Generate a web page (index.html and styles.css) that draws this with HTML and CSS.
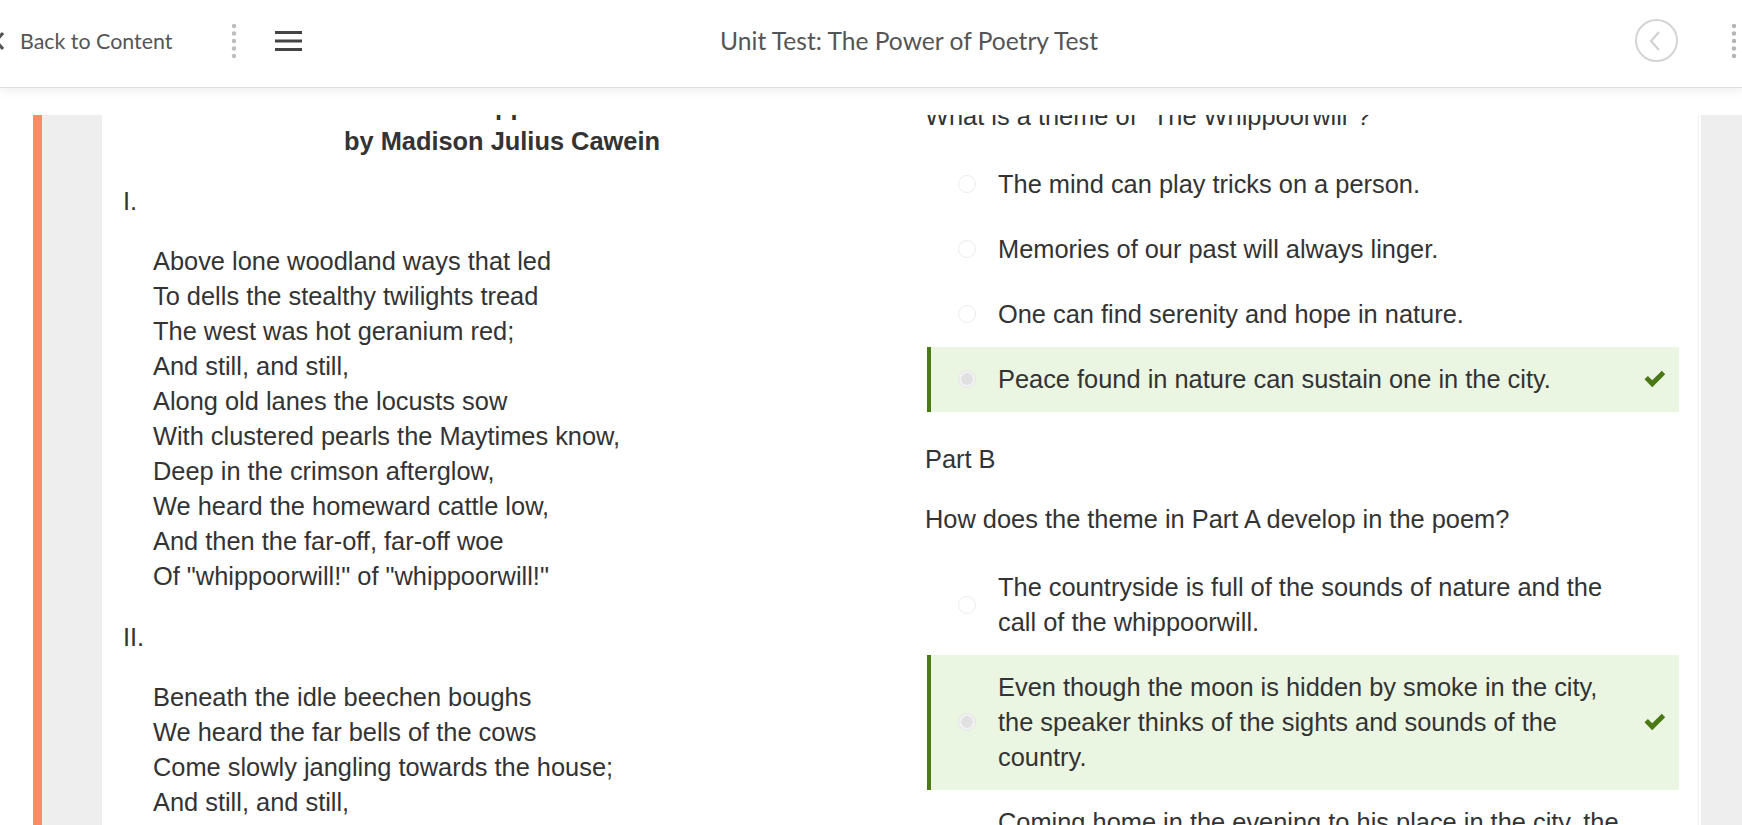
FILE: index.html
```html
<!DOCTYPE html>
<html lang="en">
<head>
<meta charset="utf-8">
<title>Unit Test: The Power of Poetry Test</title>
<link rel="stylesheet" href="styles.css">
</head>
<body>
<header class="topbar">
  <div class="left-group">
    <svg class="back-chevron" width="12" height="20" viewBox="0 0 12 20"><path d="M10 2 L3 10 L10 18" fill="none" stroke="#555" stroke-width="3.2"/></svg>
    <span class="back-label">Back to Content</span>
    <svg class="vdots" width="6" height="36" viewBox="0 0 6 36"><circle cx="3" cy="3" r="2.2"/><circle cx="3" cy="10.5" r="2.2"/><circle cx="3" cy="18" r="2.2"/><circle cx="3" cy="25.5" r="2.2"/><circle cx="3" cy="33" r="2.2"/></svg>
    <svg class="hamburger" width="27" height="20" viewBox="0 0 27 20"><rect x="0" y="0" width="27" height="3"/><rect x="0" y="8.5" width="27" height="3"/><rect x="0" y="17" width="27" height="3"/></svg>
  </div>
  <div class="title">Unit Test: The Power of Poetry Test</div>
  <div class="right-group">
    <span class="circle-btn"><svg width="14" height="22" viewBox="0 0 14 22"><path d="M11 2 L3 11 L11 20" fill="none" stroke="#cfcfcf" stroke-width="2"/></svg></span>
    <svg class="vdots light" width="6" height="36" viewBox="0 0 6 36"><circle cx="3" cy="3" r="2.2"/><circle cx="3" cy="10.5" r="2.2"/><circle cx="3" cy="18" r="2.2"/><circle cx="3" cy="25.5" r="2.2"/><circle cx="3" cy="33" r="2.2"/></svg>
  </div>
</header>

<main class="stage">
  <div class="accent"></div>
  <div class="gutter"></div>

  <section class="pane passage">
    <div class="passage-inner">
      <p class="poem-title">The Whippoorwill<br>by Madison Julius Cawein</p>
      <p class="numeral">I.</p>
      <p class="stanza">Above lone woodland ways that led<br>To dells the stealthy twilights tread<br>The west was hot geranium red;<br>And still, and still,<br>Along old lanes the locusts sow<br>With clustered pearls the Maytimes know,<br>Deep in the crimson afterglow,<br>We heard the homeward cattle low,<br>And then the far-off, far-off woe<br>Of "whippoorwill!" of "whippoorwill!"</p>
      <p class="numeral">II.</p>
      <p class="stanza">Beneath the idle beechen boughs<br>We heard the far bells of the cows<br>Come slowly jangling towards the house;<br>And still, and still,<br>Beyond the light that would not die<br>Out of the scarlet-haunted sky;</p>
    </div>
  </section>

  <section class="pane question">
    <div class="question-inner">
      <p class="prompt">What is a theme of "The Whippoorwill"?</p>
      <ul class="options">
        <li class="option"><span class="radio"></span><span class="opt-text">The mind can play tricks on a person.</span><span class="check"></span></li>
        <li class="option"><span class="radio"></span><span class="opt-text">Memories of our past will always linger.</span><span class="check"></span></li>
        <li class="option"><span class="radio"></span><span class="opt-text">One can find serenity and hope in nature.</span><span class="check"></span></li>
        <li class="option correct"><span class="radio"></span><span class="opt-text">Peace found in nature can sustain one in the city.</span><span class="check"><svg width="22" height="18" viewBox="0 0 22 18"><path d="M0.5 9.3 L3.9 6 L8.2 10.3 L17.8 0.8 L21.2 4.2 L8.2 17.2 Z" fill="#4a7814"/></svg></span></li>
      </ul>
      <p class="part">Part B</p>
      <p class="prompt">How does the theme in Part A develop in the poem?</p>
      <ul class="options">
        <li class="option"><span class="radio"></span><span class="opt-text">The countryside is full of the sounds of nature and the call of the whippoorwill.</span><span class="check"></span></li>
        <li class="option correct"><span class="radio"></span><span class="opt-text">Even though the moon is hidden by smoke in the city, the speaker thinks of the sights and sounds of the country.</span><span class="check"><svg width="22" height="18" viewBox="0 0 22 18"><path d="M0.5 9.3 L3.9 6 L8.2 10.3 L17.8 0.8 L21.2 4.2 L8.2 17.2 Z" fill="#4a7814"/></svg></span></li>
        <li class="option"><span class="radio"></span><span class="opt-text">Coming home in the evening to his place in the city, the speaker hears the whippoorwill.</span><span class="check"></span></li>
      </ul>
    </div>
  </section>

  <div class="right-gutter"></div>
</main>
</body>
</html>
```

FILE: styles.css
```css
html, body {
  margin: 0;
  padding: 0;
  height: 825px;
  overflow: hidden;
  background: #ffffff;
}

body {
  font-family: "Liberation Sans", Arial, sans-serif;
  color: #333333;
}

.topbar {
  position: relative;
  z-index: 2;
  height: 81px;
  padding-bottom: 6px;
  border-bottom: 1px solid #dedede;
  box-shadow: 0 3px 10px rgba(0, 0, 0, 0.07);
  background: #ffffff;
  display: grid;
  grid-template-columns: 320px 1178px 1fr;
  align-items: center;
  font-family: Lato, "Open Sans", sans-serif;
  color: #555555;
}

.left-group {
  display: flex;
  align-items: center;
  margin-left: -7px;
}

.back-chevron {
  flex: none;
}

.back-label {
  font-size: 21.4px;
  margin-left: 15px;
}

.vdots {
  fill: #bdbdbd;
  margin-left: 59px;
  flex: none;
}

.vdots.light {
  fill: #b5b5b5;
  margin-left: 53px;
}

.hamburger {
  fill: #444444;
  margin-left: 38px;
  flex: none;
}

.title {
  text-align: center;
  font-size: 24.6px;
  color: #555555;
}

.right-group {
  display: flex;
  align-items: center;
  justify-content: flex-end;
  padding-right: 5px;
}

.circle-btn {
  width: 39px;
  height: 39px;
  border: 2px solid #d4d4d4;
  border-radius: 50%;
  display: flex;
  align-items: center;
  justify-content: center;
}

.circle-btn svg {
  margin-left: -3px;
}

.stage {
  display: flex;
  padding-top: 27px;
  height: 710px;
  overflow: hidden;
  font-size: 25.4px;
  line-height: 35px;
}

.accent {
  flex: none;
  width: 9px;
  margin-left: 33px;
  background: #f88c64;
}

.gutter {
  flex: none;
  width: 60px;
  background: #eeeeee;
}

.pane {
  flex: none;
  width: 800px;
  overflow: hidden;
  box-sizing: border-box;
  background: #ffffff;
}

.passage {
  padding: 0 21px;
}

.passage-inner {
  margin-top: -26.3px;
}

.passage p {
  margin: 0 0 25.4px 0;
}

.poem-title {
  text-align: center;
  font-weight: bold;
}

.stanza {
  padding-left: 30px;
}

.question {
  padding: 0 23px 0 23px;
}

.question-inner {
  margin-top: -16.3px;
}

.prompt {
  margin: 0 0 18px 0;
}

.part {
  margin: 30px 0 25px 0;
}

.options {
  list-style: none;
  margin: 0 0 0 2px;
  padding: 0;
}

.option {
  display: flex;
  align-items: center;
  padding: 15px 13px 15px 27px;
  border-left: 4px solid transparent;
}

.option.correct {
  background: #eaf5e2;
  border-left-color: #4b7914;
}

.radio {
  flex: none;
  width: 16px;
  height: 16px;
  border: 1px solid #ececec;
  border-radius: 50%;
  background: #ffffff;
  margin-right: 22px;
  box-sizing: content-box;
}

.option.correct .radio {
  background: radial-gradient(circle, #e0e0e0 0 5.5px, #f2f2f2 6px);
  border-color: #e6e6e6;
}

.opt-text {
  flex: 1;
}

.check {
  flex: none;
  width: 22px;
  height: 18px;
  margin-left: 19px;
  display: flex;
}

.right-gutter {
  flex: 1;
  background: linear-gradient(to right, #f1f1f1 0 1px, #ffffff 1px 3px, #eeeeee 3px);
  margin-left: -4px;
}
```
